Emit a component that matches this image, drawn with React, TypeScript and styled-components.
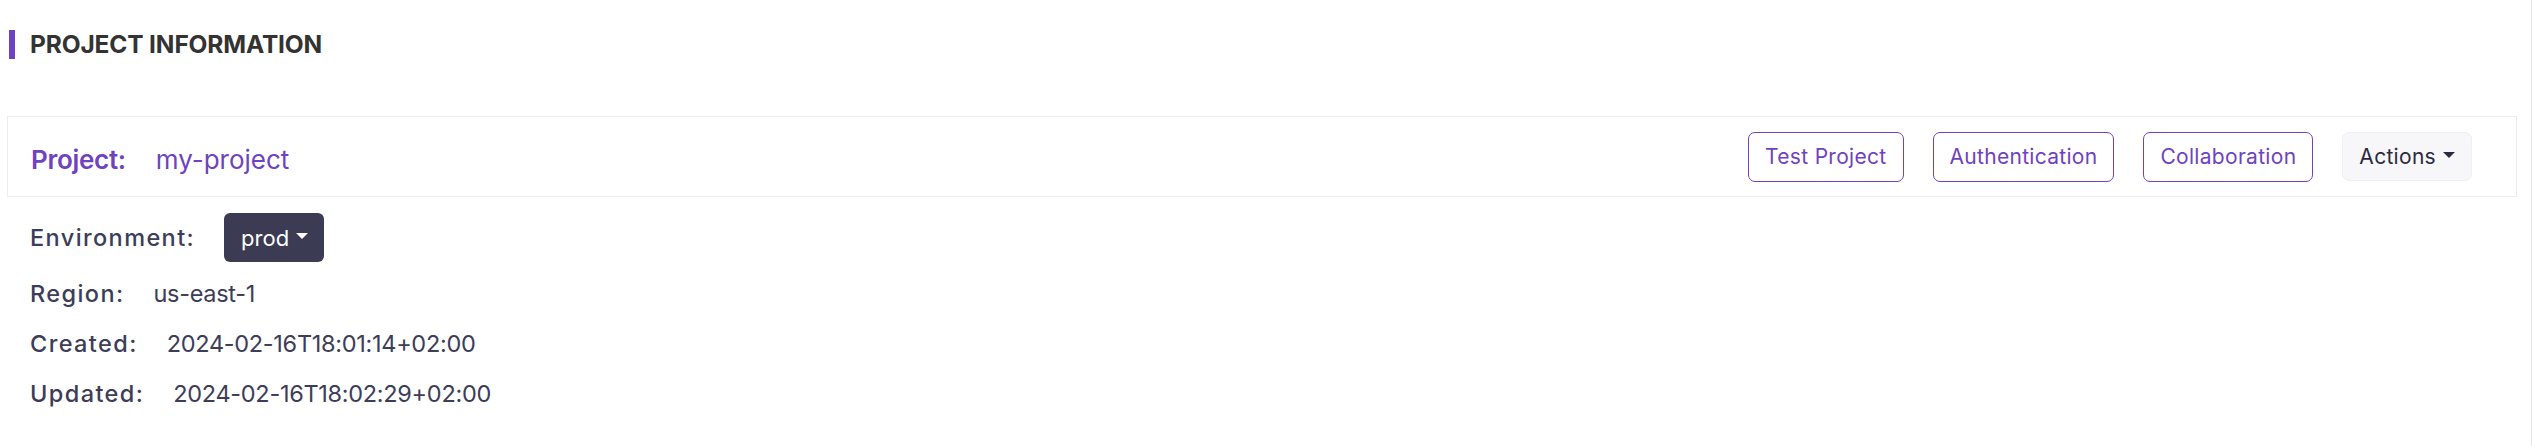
import styled, { createGlobalStyle } from "styled-components";

const GlobalStyle = createGlobalStyle`
  body {
    margin: 0;
    background: #ffffff;
    font-family: "Inter", "Open Sans", sans-serif;
  }
`;

const purple = "#6f42c1";
const ink = "#3d3d58";

const App: React.FC = () => {
  return (
    <Page>
      <GlobalStyle />
      <SectionTitle>PROJECT INFORMATION</SectionTitle>

      <ProjectCard>
        <ProjectName>
          <ProjectLabel>Project:</ProjectLabel>
          <ProjectValue>my-project</ProjectValue>
        </ProjectName>
        <ButtonGroup>
          <OutlineButton>Test Project</OutlineButton>
          <OutlineButton>Authentication</OutlineButton>
          <OutlineButton>Collaboration</OutlineButton>
          <ActionsButton>
            Actions <Caret />
          </ActionsButton>
        </ButtonGroup>
      </ProjectCard>

      <InfoList>
        <EnvRow>
          <Label>Environment:</Label>
          <EnvButton>
            prod <Caret />
          </EnvButton>
        </EnvRow>
        <InfoRow>
          <Label>Region:</Label>
          <Value>us-east-1</Value>
        </InfoRow>
        <InfoRow>
          <Label>Created:</Label>
          <Value>2024-02-16T18:01:14+02:00</Value>
        </InfoRow>
        <InfoRow>
          <Label>Updated:</Label>
          <Value>2024-02-16T18:02:29+02:00</Value>
        </InfoRow>
      </InfoList>
    </Page>
  );
};

export default App;

const Page = styled.div`
  box-sizing: border-box;
  width: 2532px;
  min-height: 446px;
  padding: 30px 14px 0 7px;
  border-right: 1px solid #e8e8ee;
`;

const SectionTitle = styled.h2`
  margin: 0 0 0 2px;
  height: 29px;
  line-height: 29px;
  border-left: 6px solid ${purple};
  padding-left: 15px;
  font-size: 24.5px;
  font-weight: 700;
  color: #333333;
  letter-spacing: -0.15px;
`;

const ProjectCard = styled.div`
  box-sizing: border-box;
  margin-top: 57px;
  height: 81px;
  border: 1px solid #ececf2;
  display: flex;
  align-items: center;
  justify-content: space-between;
  padding: 0 44px 0 23px;
`;

const ProjectName = styled.div`
  display: flex;
  align-items: baseline;
  gap: 30px;
  color: ${purple};
  font-size: 26px;
  margin-top: 6px;
`;

const ProjectLabel = styled.span`
  font-weight: 600;
  letter-spacing: -0.3px;
`;

const ProjectValue = styled.span`
  font-weight: 400;
`;

const ButtonGroup = styled.div`
  display: flex;
  align-items: center;
  gap: 29px;
`;

const BaseButton = styled.button`
  box-sizing: border-box;
  height: 50px;
  padding: 0 16px;
  border-radius: 7px;
  font-family: inherit;
  font-size: 21px;
  letter-spacing: 0.3px;
  display: inline-flex;
  align-items: center;
  gap: 7px;
  cursor: pointer;
`;

const OutlineButton = styled(BaseButton)`
  background: #ffffff;
  border: 1px solid ${purple};
  color: ${purple};
`;

const ActionsButton = styled(BaseButton)`
  height: 49px;
  background: #f7f7fa;
  border: 1px solid #efeff4;
  color: #2a2a40;
`;

const Caret = styled.span`
  display: inline-block;
  width: 0;
  height: 0;
  border-top: 6px solid currentColor;
  border-left: 6px solid transparent;
  border-right: 6px solid transparent;
  margin-top: -4px;
`;

const InfoList = styled.div`
  padding: 16px 0 0 23px;
  color: ${ink};
`;

const InfoRow = styled.div`
  display: flex;
  align-items: center;
  gap: 29px;
  height: 50px;
  font-size: 23.5px;
`;

const EnvRow = styled(InfoRow)`
  height: 49px;
  margin-bottom: 6px;
`;

const Label = styled.span`
  font-weight: 500;
  letter-spacing: 1.4px;
`;

const Value = styled.span`
  font-weight: 400;
  letter-spacing: -0.3px;
`;

const EnvButton = styled(BaseButton)`
  height: 49px;
  padding: 0 16px 0 17px;
  border: none;
  border-radius: 6px;
  background: #3b3b54;
  color: #ffffff;
  font-size: 22px;
  letter-spacing: 0;
`;
